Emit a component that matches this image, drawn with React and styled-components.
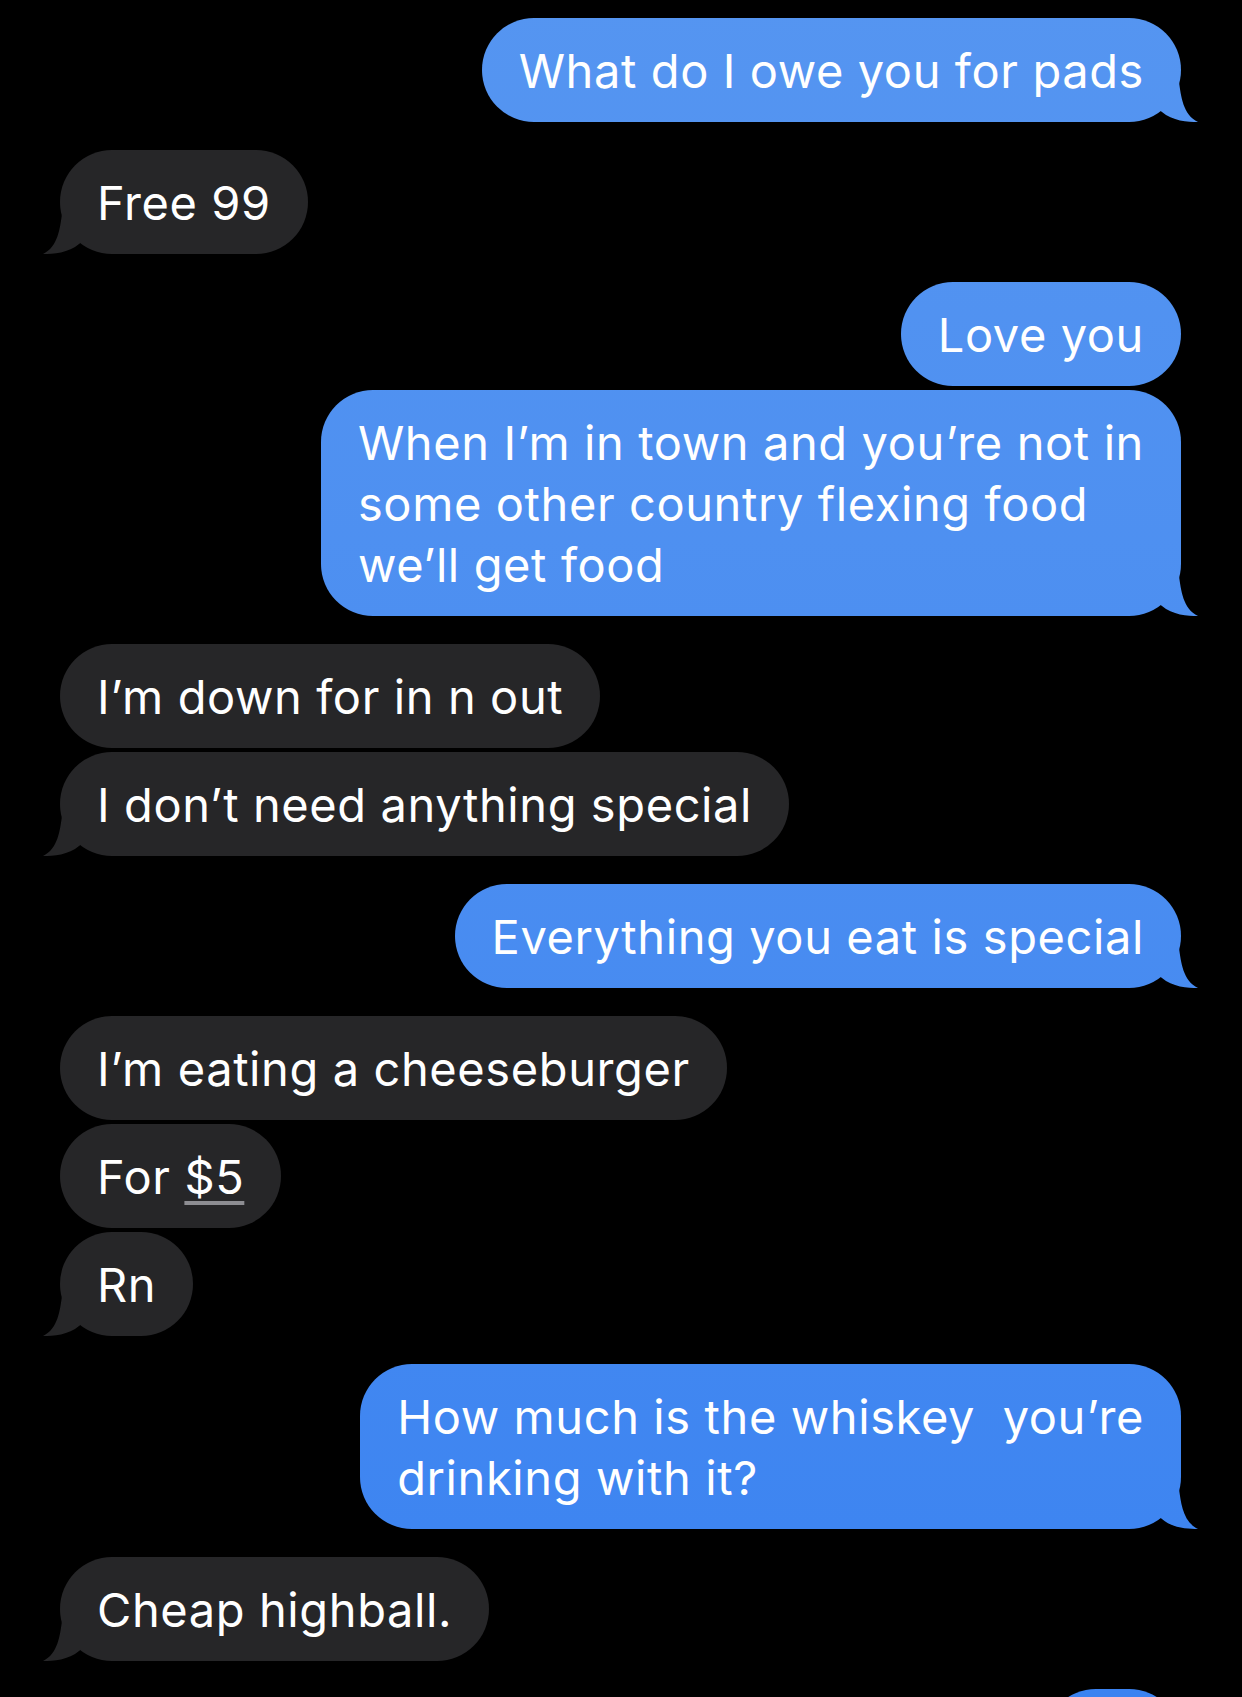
import React from "react";
import styled, { createGlobalStyle, css } from "styled-components";

const GlobalStyle = createGlobalStyle`
  html, body {
    margin: 0;
    padding: 0;
    background: #000000;
  }
  #root {
    background: #000000;
  }
`;

const Screen = styled.main`
  width: 1242px;
  height: 1697px;
  overflow: hidden;
  background: #000000;
  box-sizing: border-box;
  padding: 18px 61px 0 60px;
  display: flex;
  flex-direction: column;
  gap: 28px;
  font-family: "Inter", "Liberation Sans", sans-serif;
`;

const Group = styled.section`
  display: flex;
  flex-direction: column;
  gap: 4px;
  align-items: ${(p) => (p.$from === "me" ? "flex-end" : "flex-start")};
`;

const blueFill = css`
  background-image: linear-gradient(
    180deg,
    #5595f1 0%,
    #4a8df1 50%,
    #3b83f1 100%
  );
  background-attachment: fixed;
`;

const grayFill = css`
  background: #262628;
`;

const Bubble = styled.div`
  position: relative;
  box-sizing: border-box;
  padding: 22px 37px 21px 37px;
  border-radius: 52px;
  color: #ffffff;
  font-size: 47px;
  line-height: 61px;
  letter-spacing: 0.6px;
  white-space: pre;
  ${(p) => (p.$from === "me" ? blueFill : grayFill)}
`;

const Tail = styled.span`
  position: absolute;
  bottom: 0;
  width: 40px;
  height: 40px;
  ${(p) =>
    p.$from === "me"
      ? css`
          right: -19px;
          ${blueFill};
          clip-path: path("M 19 0 C 21 14, 23 33, 38 40 C 28 40, 12 39, 2 30 L 0 28.5 L 0 0 Z");
        `
      : css`
          left: -19px;
          ${grayFill};
          clip-path: path("M 21 0 C 19 14, 17 33, 2 40 C 12 40, 28 39, 38 30 L 40 28.5 L 40 0 Z");
        `}
`;

const Money = styled.span`
  text-decoration: underline;
  text-decoration-color: #8d8d92;
  text-decoration-thickness: 4px;
  text-underline-offset: 7px;
  text-decoration-skip-ink: auto;
`;

const groups = [
  { from: "me", messages: ["What do I owe you for pads"] },
  { from: "them", messages: ["Free 99"] },
  {
    from: "me",
    messages: [
      "Love you",
      "When I\u2019m in town and you\u2019re not in\nsome other country flexing food\nwe\u2019ll get food",
    ],
  },
  {
    from: "them",
    messages: ["I\u2019m down for in n out", "I don\u2019t need anything special"],
  },
  { from: "me", messages: ["Everything you eat is special"] },
  {
    from: "them",
    messages: [
      "I\u2019m eating a cheeseburger",
      <>
        For <Money>$5</Money>
      </>,
      "Rn",
    ],
  },
  {
    from: "me",
    messages: ["How much is the whiskey  you\u2019re\ndrinking with it?"],
  },
  { from: "them", messages: ["Cheap highball."] },
  { from: "me", messages: ["Ok"] },
];

export default function App() {
  return (
    <>
      <GlobalStyle />
      <Screen>
        {groups.map((g, gi) => (
          <Group key={gi} $from={g.from}>
            {g.messages.map((m, mi) => (
              <Bubble key={mi} $from={g.from}>
                {m}
                {mi === g.messages.length - 1 && <Tail $from={g.from} />}
              </Bubble>
            ))}
          </Group>
        ))}
      </Screen>
    </>
  );
}
